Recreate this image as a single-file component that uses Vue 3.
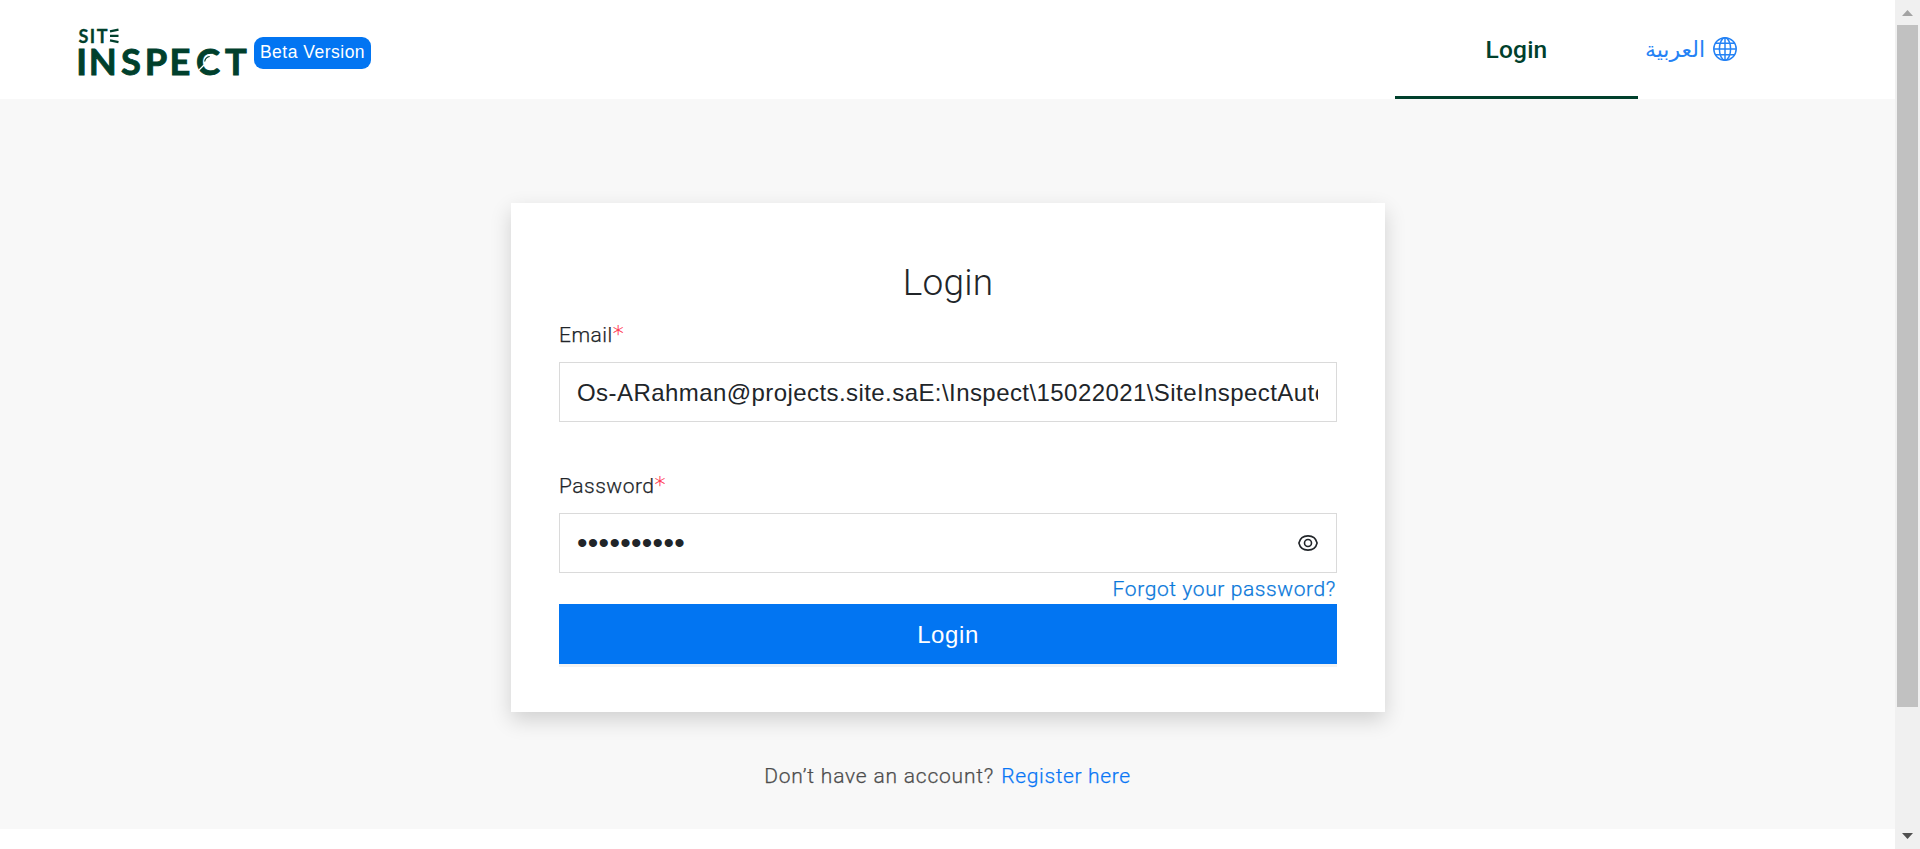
<script setup>
import { ref } from 'vue'

const email = ref('Os-ARahman@projects.site.saE:\\Inspect\\15022021\\SiteInspectAutomation')
const password = ref('••••••••••')
</script>

<template>
  <div class="viewport">
    <div class="page">
      <header class="topbar">
        <div class="brand">
          <svg class="logo" width="170" height="50" viewBox="0 0 170 50">
            <g class="logo-text">
              <text class="logo-small" y="14.800" x="-.5 10.800 17.800">SIT</text>
              <text class="logo-big" y="46.700" x="-2.700 9.800 42 65.800 90.500 117 146">INSPECT</text>
            </g>
            <path class="logo-lines" d="M31 3.400 39.500 1.600M31 7.900H39.500M31 12.400 39.500 14.200" />
            <path class="lens-cut" d="M118.500 43.500 125 37" />
            <path class="lens-arc" d="M125.700 33.500A6 6 0 0 1 130.700 28.500" />
          </svg>
          <span class="badge">Beta Version</span>
        </div>
        <nav class="nav">
          <a class="tab">Login</a>
          <a class="language">
            <span class="arabic" lang="ar">العربية</span>
            <svg width="24" height="24" viewBox="0 0 24 24">
              <g fill="none" stroke="#2482f5" stroke-width="1.5">
                <circle cx="12" cy="12" r="11.2" />
                <ellipse cx="12" cy="12" rx="5.6" ry="11.2" />
                <path d="M12 .8V23.2M.8 12H23.2M2.8 6.2H21.2M2.8 17.8H21.2" />
              </g>
            </svg>
          </a>
        </nav>
      </header>

      <main class="content">
        <form class="card" @submit.prevent>
          <h1 class="title">Login</h1>
          <label class="label">Email<span class="star">*</span></label>
          <div class="field email-field"><span class="value">{{ email }}</span></div>
          <label class="label password-label">Password<span class="star">*</span></label>
          <div class="field">
            <span class="dots">{{ password }}</span>
            <svg class="eye" width="20" height="16" viewBox="0 0 20 16">
              <g fill="none" stroke="#212529" stroke-width="1.6">
                <path d="M.9 8C2 3.4 5.6.9 10 .9S18 3.4 19.1 8C18 12.600 14.400 15.100 10 15.100S2 12.600.9 8Z" />
                <circle cx="10" cy="8" r="3.5" />
              </g>
            </svg>
          </div>
          <a class="forgot">Forgot your password?</a>
          <button class="submit">Login</button>
        </form>
        <p class="register"><span class="question">Don’t have an account?</span><a>Register here</a></p>
      </main>
    </div>

    <aside class="scrollbar">
      <svg class="arrow" width="25" height="25" viewBox="0 0 25 25"><path fill="#a3a3a3" d="M7 16 12.500 10 18 16Z" /></svg>
      <div class="thumb"></div>
      <svg class="arrow" width="25" height="25" viewBox="0 0 25 25"><path fill="#505050" d="M7 9H18L12.500 15Z" /></svg>
    </aside>
  </div>
</template>

<style>
html, body { margin: 0; overflow: hidden; background: #fff; }
</style>

<style scoped>
* { box-sizing: border-box; }
.viewport {
  display: flex;
  width: 1920px;
  height: 849px;
  font-family: "Liberation Sans", Arial, sans-serif;
  color: #212529;
  background: #fff;
}
.page { flex: 1; }
.topbar {
  display: flex;
  justify-content: space-between;
  height: 99px;
  padding: 0 158px 0 79px;
}
.brand { display: flex; align-items: flex-start; }
.logo { margin-top: 28px; overflow: visible; }
.logo-text { fill: #00402c; font-family: Lato, sans-serif; font-weight: 700; }
.logo-small { font-size: 18px; stroke: #00402c; stroke-width: .3px; }
.logo-big { font-size: 36.300px; stroke: #00402c; stroke-width: .9px; }
.logo-lines { fill: none; stroke: #00402c; stroke-width: 2.2; }
.lens-cut { fill: none; stroke: #fff; stroke-width: 1.2; }
.lens-arc { fill: none; stroke: #00402c; stroke-width: 1.2; }
.badge {
  width: 117px;
  height: 32px;
  margin: 37px 0 0 5px;
  border-radius: 9px;
  background: #0275f2;
  color: #fff;
  font-size: 17.500px;
  line-height: 30px;
  letter-spacing: .5px;
  text-align: center;
}
.nav { display: flex; }
.tab {
  width: 243px;
  height: 99px;
  border-bottom: 3px solid #00402c;
  color: #00402c;
  font-family: Roboto, sans-serif;
  font-size: 24.500px;
  font-weight: 500;
  line-height: 99px;
  letter-spacing: .2px;
  text-align: center;
}
.language {
  display: flex;
  align-items: center;
  justify-content: flex-end;
  gap: 8px;
  width: 99px;
  height: 98px;
  color: #2482f5;
}
.arabic { font-family: "DejaVu Sans", sans-serif; font-size: 22px; line-height: 30px; padding-top: 2px; }
.content {
  height: 730px;
  padding-top: 104px;
  background: #f8f8f8;
}
.card {
  display: flex;
  flex-direction: column;
  width: 874px;
  height: 509px;
  margin-left: 511px;
  padding: 57px 48px 48px;
  background: #fff;
  box-shadow: 0 8px 20px rgba(0, 0, 0, .16);
}
.title {
  height: 44px;
  margin: 0;
  font-family: Roboto, sans-serif;
  font-size: 37px;
  font-weight: 300;
  line-height: 46px;
  letter-spacing: .2px;
  text-align: center;
}
.label, .forgot, .register {
  font-family: Roboto, sans-serif;
  font-size: 21px;
  font-weight: 300;
  letter-spacing: .6px;
  -webkit-text-stroke-width: .25px;
}
.label {
  display: flex;
  align-items: flex-start;
  height: 30px;
  margin: 17px 0 11px;
  line-height: 29px;
  letter-spacing: .5px;
}
.star {
  margin-top: -2px;
  color: #ff2a45;
  font-family: "DejaVu Sans", sans-serif;
  font-size: 22px;
  font-weight: 200;
}
.field {
  display: flex;
  align-items: center;
  justify-content: space-between;
  height: 60px;
  padding: 0 18px 0 17px;
  border: 1px solid #dadada;
}
.value {
  overflow: hidden;
  white-space: nowrap;
  font-size: 24px;
  line-height: 58px;
  letter-spacing: .43px;
}
.email-field { padding-top: 2px; }
.password-label { margin-top: 50px; }
.dots {
  font-size: 30px;
  line-height: 58px;
  letter-spacing: .3px;
}
.forgot {
  align-self: flex-end;
  height: 31px;
  padding-right: 1px;
  color: #0a78da;
  line-height: 32px;
}
.submit {
  flex: none;
  height: 60px;
  padding: 2px 0 0;
  border: 0;
  background: #0275f2;
  box-shadow: 0 3px 0 #f3f3f3;
  color: #fff;
  font: 400 24px "Liberation Sans", Arial, sans-serif;
  letter-spacing: .6px;
}
.register {
  display: flex;
  justify-content: center;
  gap: 7px;
  margin: 48px 0 0;
  line-height: 32px;
  color: #4d4d4d;
}
.question { letter-spacing: .8px; }
.register a { color: #0876f5; letter-spacing: .65px; }
.scrollbar {
  display: flex;
  flex-direction: column;
  align-items: center;
  width: 25px;
  height: 849px;
  background: #f0f0f0;
}
.thumb { width: 21px; height: 682px; margin-bottom: auto; background: #c1c1c1; }
.arrow { flex: none; }
</style>
